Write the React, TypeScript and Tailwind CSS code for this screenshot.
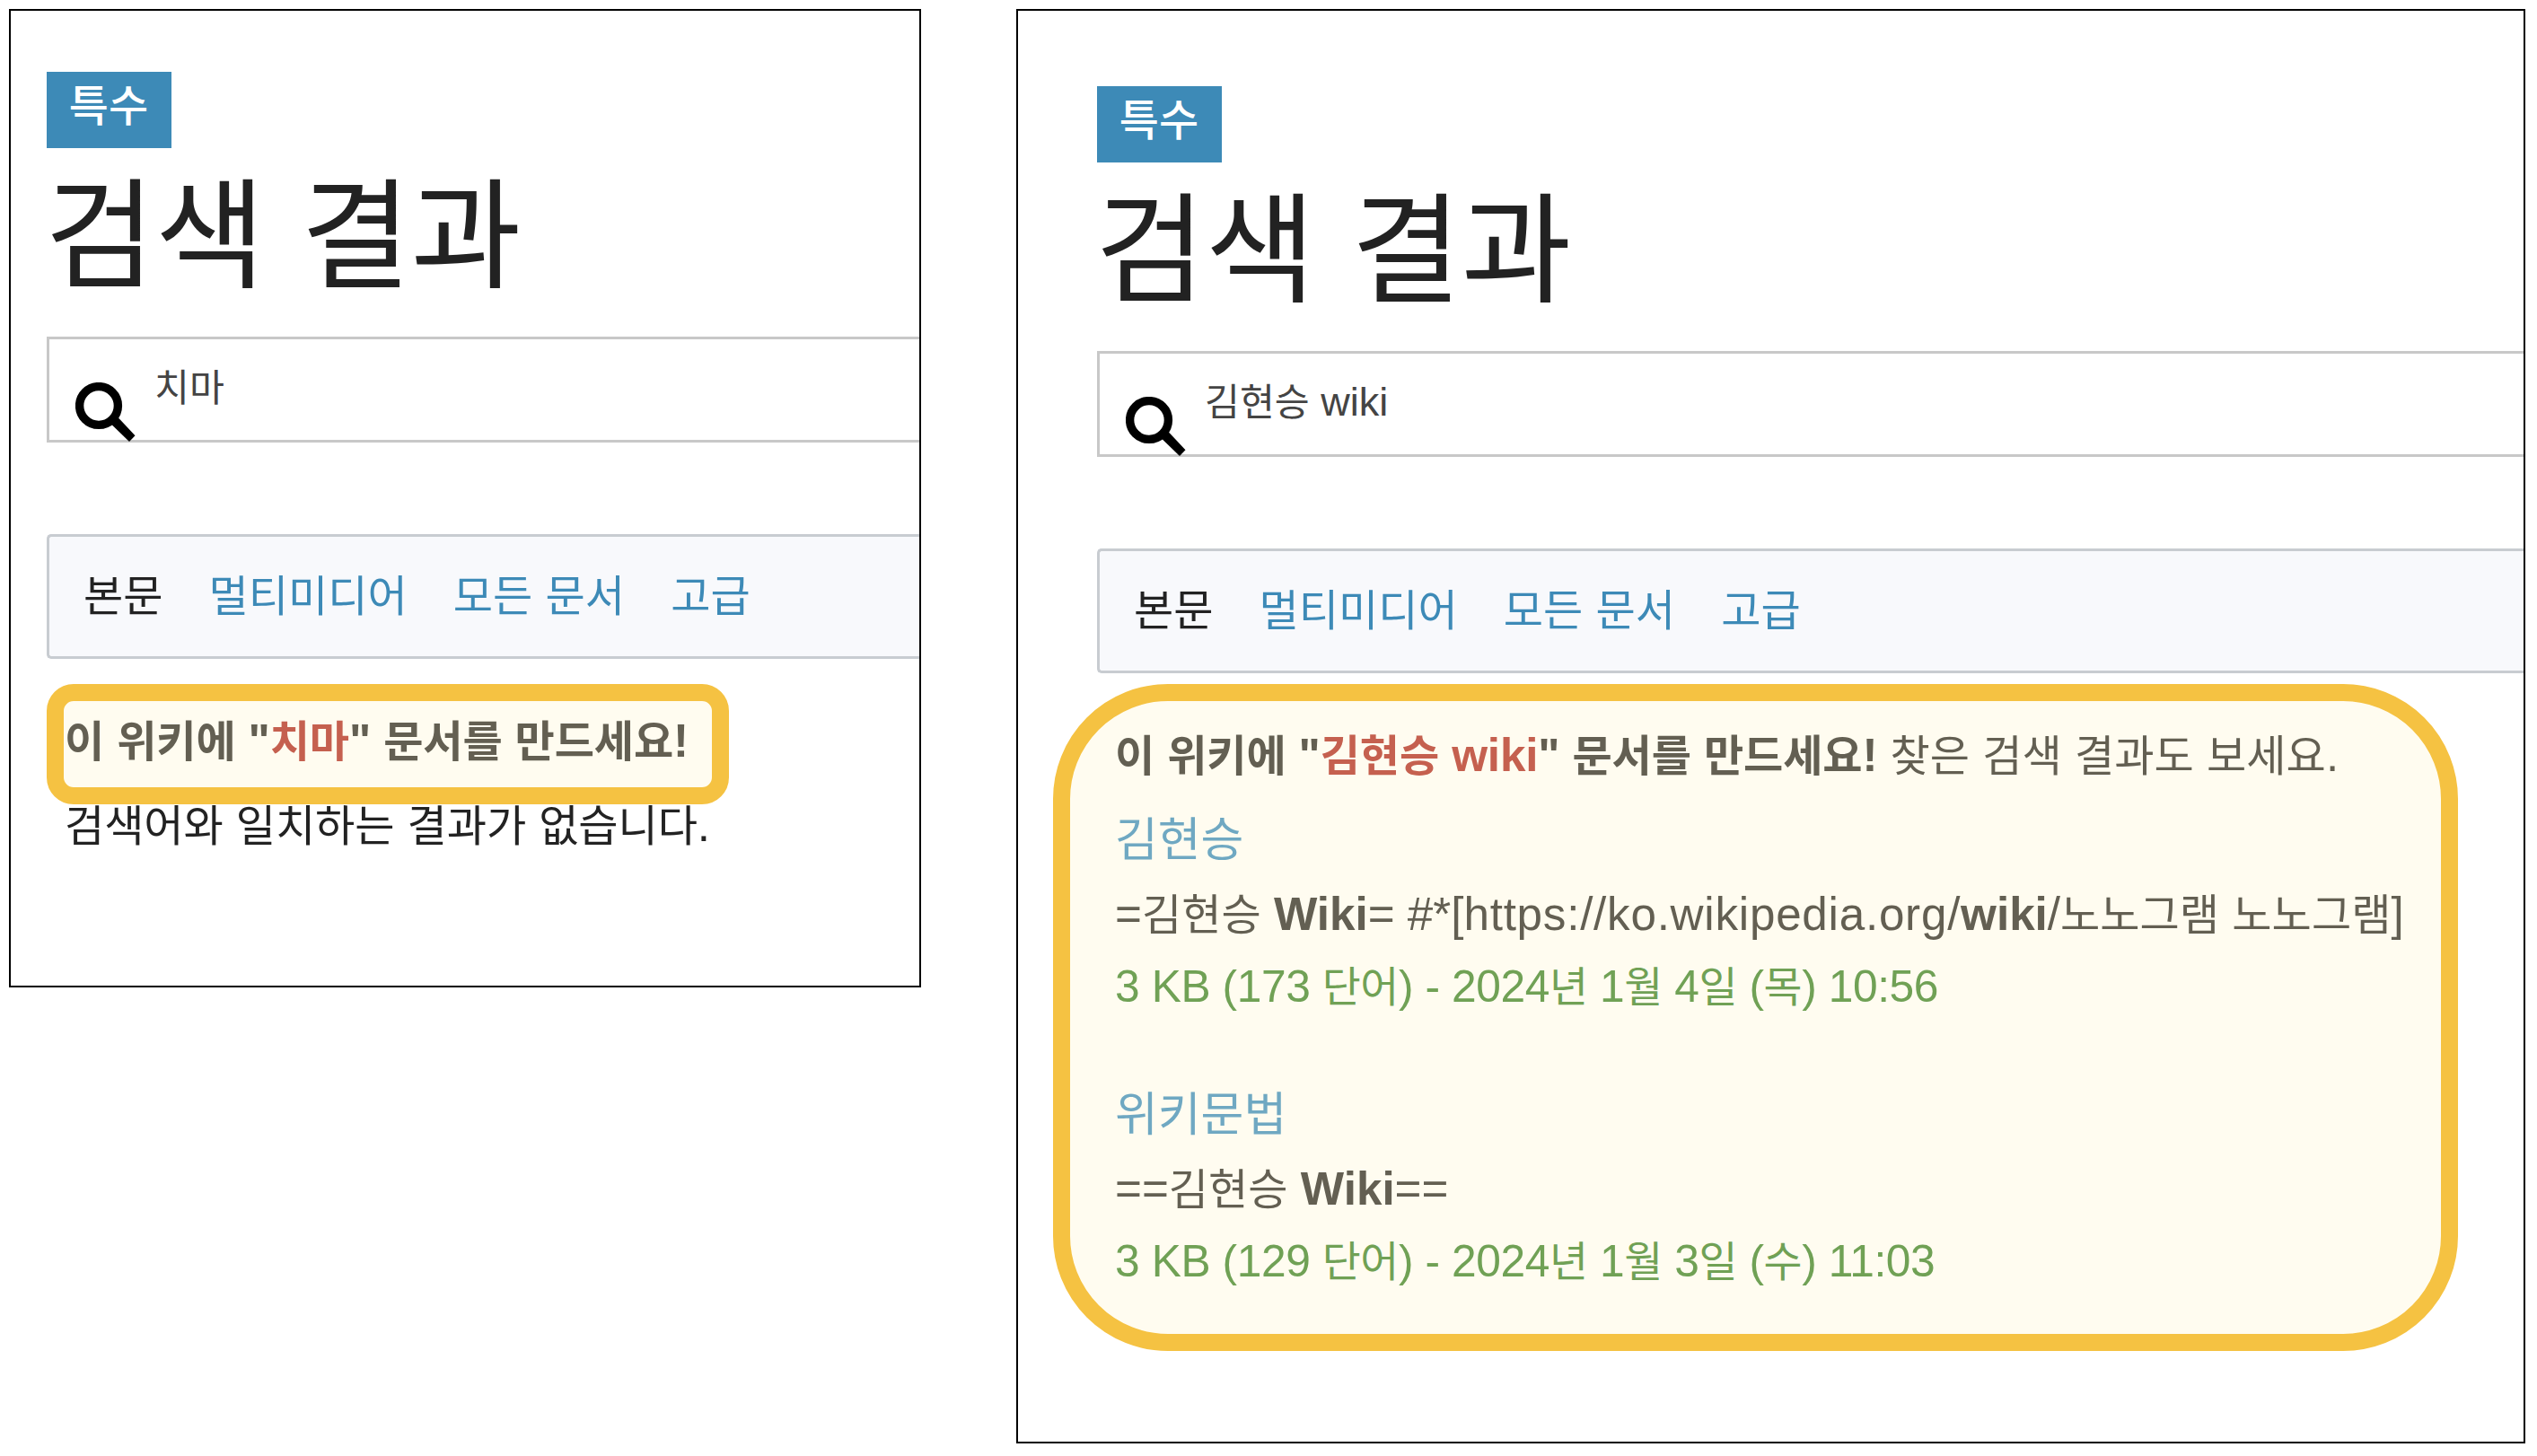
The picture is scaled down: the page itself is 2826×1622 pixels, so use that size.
import type { ReactNode } from "react";

const tabs = ["멀티미디어", "모든 문서", "고급"];

// Hangul runs are set a little smaller than the Latin text around them
function Mixed({ children }: { children: string }) {
  return (
    <>
      {children.split(/([가-힣]+)/).map((run, i) =>
        i % 2 === 1 ? (
          <span key={i} className="text-[0.94em] leading-none">
            {run}
          </span>
        ) : (
          run
        )
      )}
    </>
  );
}

function SearchIcon() {
  return (
    <svg viewBox="0 0 67 66" className="mt-[48px] h-[66px] w-[67px] shrink-0">
      <circle cx="26" cy="26" r="21.4" fill="none" stroke="#000" strokeWidth="9.4" />
      <path d="M47.7 39.3 L66.5 59.3 L60 66 L40.4 47 Z" fill="#000" />
    </svg>
  );
}

// Badge, title, search field and tabs shared by both panels
function SearchHeader({ query }: { query: string }) {
  return (
    <>
      <div className="flex h-[85px] w-[139px] items-center justify-center bg-[#3d8ab7] pr-[1px] pb-[7px] text-[48px] leading-none font-medium tracking-[0.2px] text-white">
        특수
      </div>
      <h1 className="-ml-[2px] h-[200px] text-[142px] leading-[191px] text-[#222]">
        <Mixed>검색 결과</Mixed>
      </h1>
      <div className="mt-[10px] flex h-[118px] border-3 border-r-0 border-[#c8c8c8] pl-[29px]">
        <SearchIcon />
        <span className="ml-[21px] text-[45px] leading-[107px] text-[#444]">
          <Mixed>{query}</Mixed>
        </span>
      </div>
      <nav className="mt-[102px] flex h-[139px] items-center gap-[51px] rounded-l-[5px] border-3 border-r-0 border-[#c8ccd1] bg-[#f8f9fc] pb-[2px] pl-[38px] text-[51.2px] leading-none">
        <span className="text-[#222]">
          <Mixed>본문</Mixed>
        </span>
        {tabs.map((tab) => (
          <a key={tab} className="text-[#3d8ab7]">
            <Mixed>{tab}</Mixed>
          </a>
        ))}
      </nav>
    </>
  );
}

function CreatePrompt({ name }: { name: string }) {
  return (
    <b className="tracking-[-0.15px]">
      <Mixed>이 위키에 "</Mixed>
      <span className="text-[#c5604f]">
        <Mixed>{name}</Mixed>
      </span>
      <Mixed>" 문서를 만드세요!</Mixed>
    </b>
  );
}

function Result({ title, meta, children }: { title: string; meta: string; children: ReactNode }) {
  return (
    <article>
      <h2 className="text-[55.3px] leading-[86px] text-[#6fa8c2]">
        <Mixed>{title}</Mixed>
      </h2>
      <p className="leading-[81px]">{children}</p>
      <p className="text-[49.7px] leading-[81px] tracking-[-0.4px] text-[#70a155]">
        <Mixed>{meta}</Mixed>
      </p>
    </article>
  );
}

export default function App() {
  return (
    <div className="flex h-[1622px] w-[2826px] items-start gap-[106px] bg-white pt-[10px] pl-[10px] font-['Liberation_Sans','Noto_Sans_CJK_KR',sans-serif] whitespace-nowrap">
      <section className="h-[1090px] w-[1016px] shrink-0 overflow-hidden border-2 border-black pt-[68px] pl-[40px]">
        <SearchHeader query="치마" />
        <div className="mt-[28px] h-[134px] w-[760px] rounded-[30px] border-[19px] border-[#f5c242] bg-[#fffcf0] pl-[1px] text-[51.2px] leading-[90px] text-[#635f52]">
          <CreatePrompt name="치마" />
        </div>
        <p className="pl-[20px] text-[51.2px] leading-[48px] tracking-[-0.1px] text-[#222]">
          <Mixed>검색어와 일치하는 결과가 없습니다.</Mixed>
        </p>
      </section>

      <section className="h-[1598px] w-[1681px] shrink-0 overflow-hidden border-2 border-black pt-[84px] pl-[88px]">
        <SearchHeader query="김현승 wiki" />
        <div className="mt-[12px] -ml-[49px] h-[743px] w-[1565px] rounded-[128px] border-[19px] border-[#f5c242] bg-[#fffcf0] pt-[11px] pl-[50px] text-[51.2px] text-[#635f52]">
          <p className="leading-[100px]">
            <CreatePrompt name="김현승 wiki" />
            <Mixed> 찾은 검색 결과도 보세요.</Mixed>
          </p>
          <div className="flex flex-col gap-[58px]">
            <Result title="김현승" meta="3 KB (173 단어) - 2024년 1월 4일 (목) 10:56">
              <Mixed>=김현승 </Mixed>
              <b>Wiki</b>= #*[<span className="tracking-[0.75px]">https://ko.wikipedia.org/</span>
              <b>wiki</b>
              <Mixed>/노노그램 노노그램]</Mixed>
            </Result>
            <Result title="위키문법" meta="3 KB (129 단어) - 2024년 1월 3일 (수) 11:03">
              <Mixed>==김현승 </Mixed>
              <b>Wiki</b>==
            </Result>
          </div>
        </div>
      </section>
    </div>
  );
}
